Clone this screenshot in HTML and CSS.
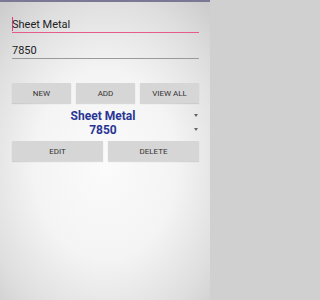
FILE: index.html
```html
<!DOCTYPE html>
<html>
<head>
<meta charset="utf-8">
<link rel="stylesheet" href="styles.css">
</head>
<body>
<div class="frame">
  <div class="topbar"></div>
  <div class="screen">
    <div class="field active"><span class="caret"></span>Sheet Metal</div>
    <div class="field">7850</div>
    <div class="row three">
      <div class="btn">NEW</div>
      <div class="btn">ADD</div>
      <div class="btn">VIEW ALL</div>
    </div>
    <div class="spinner first"><span class="val">Sheet Metal</span><span class="arrow"></span></div>
    <div class="spinner"><span class="val">7850</span><span class="arrow"></span></div>
    <div class="row two">
      <div class="btn">EDIT</div>
      <div class="btn">DELETE</div>
    </div>
  </div>
</div>
</body>
</html>
```
FILE: styles.css
```css
html, body {
  margin: 0;
  background: #d0d0d0;
  overflow: hidden;
}
body {
  font-family: Roboto, "Noto Sans", sans-serif;
}
.frame {
  width: 210px;
  height: 300px;
  background: radial-gradient(ellipse 75% 70% at 50% 55%, #fbfbfb 0%, #f4f4f4 45%, #dedede 80%, #cdcdcd 100%);
  overflow: hidden;
}
.topbar {
  height: 2px;
  background: #7b7896;
}
.screen {
  padding: 0 11px 0 12px;
}
.field {
  font-size: 11px;
  line-height: 13px;
  color: #222;
  padding-bottom: 1px;
  border-bottom: 1px solid #9a9a9a;
  margin-top: 11px;
}
.field.active {
  margin-top: 15px;
  border-bottom: 1.5px solid #e65b8a;
}
.caret {
  display: inline-block;
  width: 1px;
  height: 14px;
  background: #e2407a;
  vertical-align: -3px;
  margin-right: -1px;
}
.row {
  display: grid;
  gap: 5px;
}
.row.three {
  grid-template-columns: 1fr 1fr 1fr;
  margin-top: 24px;
}
.row.two {
  grid-template-columns: 1fr 1fr;
  margin-top: 4px;
}
.btn {
  height: 20px;
  background: #d6d6d6;
  box-shadow: 0 1px 1px rgba(0,0,0,0.12);
  color: #333;
  font-size: 8px;
  display: flex;
  align-items: center;
  justify-content: center;
}
.spinner {
  display: flex;
  align-items: center;
  height: 14px;
}
.spinner.first {
  margin-top: 6px;
}
.val {
  flex: 1;
  text-align: center;
  font-weight: bold;
  font-size: 12px;
  line-height: 14px;
  color: #2a3595;
}
.arrow {
  width: 0;
  height: 0;
  border-left: 2.5px solid transparent;
  border-right: 2.5px solid transparent;
  border-top: 3px solid #666;
  margin-right: 1px;
  margin-top: -2px;
}
```
